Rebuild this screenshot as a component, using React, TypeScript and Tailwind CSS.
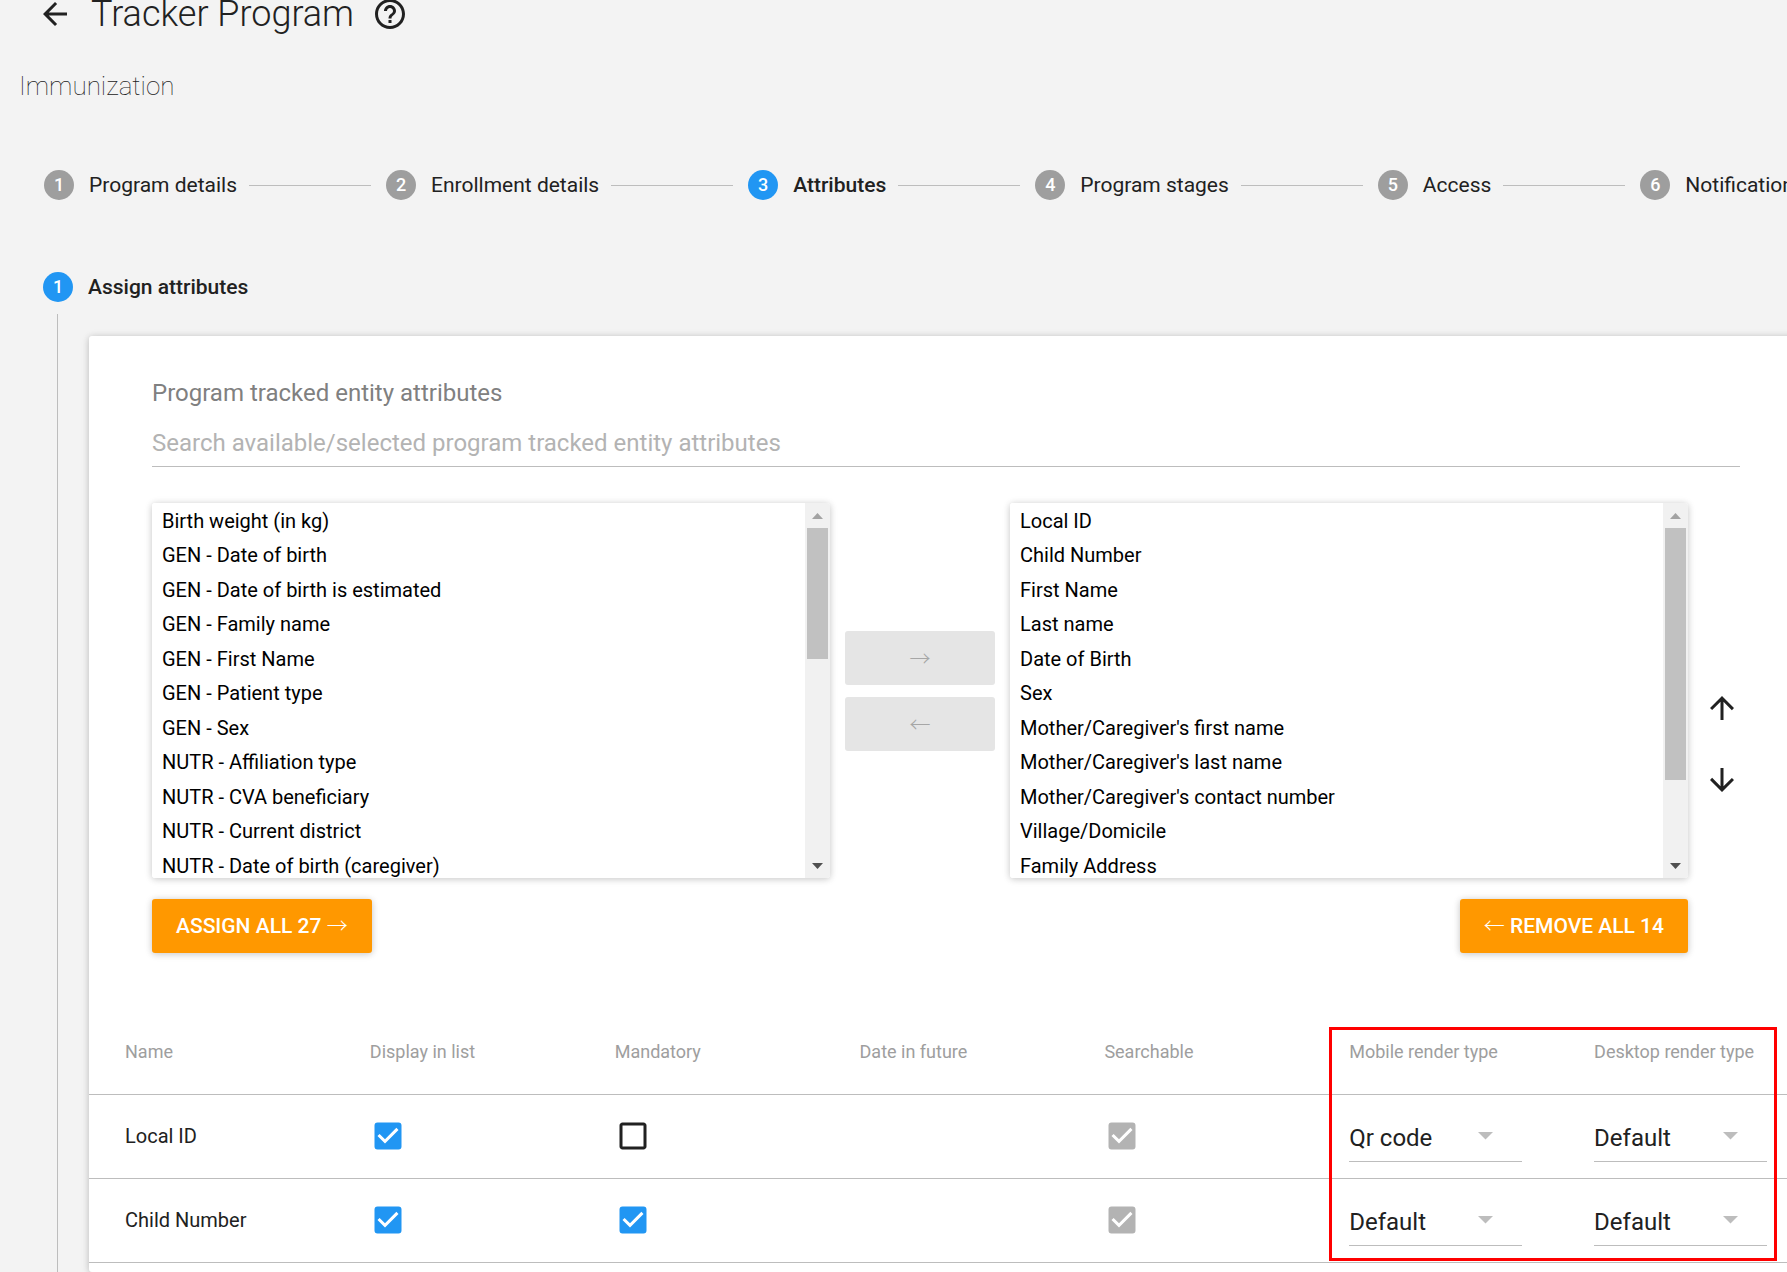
import React from "react";
import {
  MdArrowBack,
  MdArrowDownward,
  MdArrowUpward,
  MdCheckBox,
  MdCheckBoxOutlineBlank,
  MdHelpOutline,
} from "react-icons/md";

const steps = [
  "Program details",
  "Enrollment details",
  "Attributes",
  "Program stages",
  "Access",
  "Notifications",
];

const available = [
  "Birth weight (in kg)",
  "GEN - Date of birth",
  "GEN - Date of birth is estimated",
  "GEN - Family name",
  "GEN - First Name",
  "GEN - Patient type",
  "GEN - Sex",
  "NUTR - Affiliation type",
  "NUTR - CVA beneficiary",
  "NUTR - Current district",
  "NUTR - Date of birth (caregiver)",
];

const assigned = [
  "Local ID",
  "Child Number",
  "First Name",
  "Last name",
  "Date of Birth",
  "Sex",
  "Mother/Caregiver's first name",
  "Mother/Caregiver's last name",
  "Mother/Caregiver's contact number",
  "Village/Domicile",
  "Family Address",
];

const columns = [
  "Name",
  "Display in list",
  "Mandatory",
  "Date in future",
  "Searchable",
  "Mobile render type",
  "Desktop render type",
];

const rows = [
  { name: "Local ID", mandatory: false, mobile: "Qr code", desktop: "Default" },
  { name: "Child Number", mandatory: true, mobile: "Default", desktop: "Default" },
];

function StepBadge({ n, active }: { n: number; active: boolean }) {
  return (
    <span className="flex w-9 shrink-0 justify-center">
      <span
        className={`flex size-[30px] items-center justify-center rounded-full text-[18px] leading-none font-medium text-white ${
          active ? "bg-[#2196f3]" : "bg-[#9e9e9e]"
        }`}
      >
        {n}
      </span>
    </span>
  );
}

function Arrow({ children }: { children: string }) {
  return (
    <span className="font-['Noto_Sans_CJK_JP',sans-serif] leading-none font-light">
      {children}
    </span>
  );
}

function ListBox({
  label,
  items,
  thumb,
}: {
  label: string;
  items: string[];
  thumb: string;
}) {
  return (
    <div className="flex h-[375px] flex-1 overflow-hidden rounded-[3px] bg-white shadow-[0_1px_9px_rgba(0,0,0,0.12),0_1px_6px_rgba(0,0,0,0.12)]">
      <select
        multiple
        aria-label={label}
        className="h-full min-w-0 flex-1 overflow-hidden border-0 bg-white pt-[6px] pb-0 pl-2 text-[20px] text-black outline-none [scrollbar-width:none]"
      >
        {items.map((item) => (
          <option
            key={item}
            className="h-[34px] px-[2px] py-0 leading-[34px] even:h-[35px]"
          >
            {item}
          </option>
        ))}
      </select>
      <div className="flex w-[25px] flex-col items-center bg-[#f1f1f1]">
        <div className="flex h-[25px] shrink-0 items-center">
          <svg width="11" height="6" viewBox="0 0 11 6" fill="#a3a3a3">
            <path d="M0 6L5.5 0L11 6Z" />
          </svg>
        </div>
        <div className={`w-[21px] bg-[#c1c1c1] ${thumb}`} />
        <div className="mt-auto flex h-[25px] shrink-0 items-center">
          <svg width="11" height="6" viewBox="0 0 11 6" fill="#505050">
            <path d="M0 0L5.5 6L11 0Z" />
          </svg>
        </div>
      </div>
    </div>
  );
}

function Tick({
  label,
  checked,
  disabled,
}: {
  label: string;
  checked: boolean;
  disabled?: boolean;
}) {
  const [on, setOn] = React.useState(checked);
  const Icon = on ? MdCheckBox : MdCheckBoxOutlineBlank;
  return (
    <label className="relative flex size-9">
      <input
        type="checkbox"
        aria-label={label}
        checked={on}
        disabled={disabled}
        onChange={(e) => setOn(e.target.checked)}
        className="absolute inset-0 size-full opacity-0"
      />
      <Icon
        size={36}
        className={
          disabled ? "text-[#b3b3b3]" : on ? "text-[#2196f3]" : "text-[#212121]"
        }
      />
    </label>
  );
}

function RenderType({ label, value }: { label: string; value: string }) {
  return (
    <div className="relative mt-[2px] w-[173px] border-b border-[#bdbdbd]">
      <select
        aria-label={label}
        defaultValue={value}
        className="h-12 w-full appearance-none bg-transparent pt-[2px] text-[24px] text-[#212121] outline-none"
      >
        <option>Default</option>
        <option>Qr code</option>
      </select>
      <svg
        className="pointer-events-none absolute top-[19px] right-[29px]"
        width="15"
        height="8"
        viewBox="0 0 15 8"
        fill="#bdbdbd"
      >
        <path d="M0 0H15L7.5 7.5Z" />
      </svg>
    </div>
  );
}

export default function App() {
  return (
    <div className="flex min-h-screen flex-col overflow-hidden bg-[#f3f3f3] font-[Roboto,sans-serif] text-[#212121]">
      <header className="flex h-[27px] items-center pl-[37px]">
        <button type="button" aria-label="Back" className="shrink-0">
          <MdArrowBack size={36} />
        </button>
        <h1 className="ml-[18px] pt-[2px] text-[36px] leading-[27px] font-light">
          Tracker Program
        </h1>
        <button type="button" aria-label="Help" className="ml-[18px] shrink-0">
          <MdHelpOutline size={36} />
        </button>
      </header>

      <h2 className="mt-[41px] pl-[19px] text-[26px] leading-9 font-thin">
        Immunization
      </h2>

      <nav className="mt-[63px] flex h-9 items-center gap-3 pl-[41px]">
        {steps.map((step, i) => (
          <React.Fragment key={step}>
            {i > 0 && <span className="h-px w-[122px] shrink-0 bg-[#bdbdbd]" />}
            <button
              type="button"
              className={`flex shrink-0 items-center gap-3 text-[21px] leading-9 ${
                i === 2 ? "font-medium" : ""
              }`}
            >
              <StepBadge n={i + 1} active={i === 2} />
              {step}
            </button>
          </React.Fragment>
        ))}
      </nav>

      <div className="mt-[66px] flex h-9 items-center gap-3 pl-10 text-[21px] font-medium">
        <StepBadge n={1} active />
        <h3 className="pt-[2px]">Assign attributes</h3>
      </div>

      <div className="mt-[9px] ml-[57px] flex flex-1 border-l border-[#bdbdbd] pt-[22px] pl-[31px]">
        <section className="-mr-4 flex-1 rounded-[3px] bg-white shadow-[0_1px_9px_rgba(0,0,0,0.12),0_1px_6px_rgba(0,0,0,0.12)]">
          <div className="px-[63px] pt-[39px]">
            <label
              htmlFor="search"
              className="block text-[24px] leading-9 text-[#808080]"
            >
              Program tracked entity attributes
            </label>
            <input
              id="search"
              type="text"
              placeholder="Search available/selected program tracked entity attributes"
              className="mt-[7px] block h-[49px] w-full border-b border-[#bdbdbd] bg-transparent pt-[2px] text-[24px] outline-none placeholder:text-[#b3b3b3]"
            />

            <div className="mt-9 flex">
              <div className="flex flex-1 items-center gap-[15px]">
                <ListBox label="Available attributes" items={available} thumb="h-[131px]" />
                <div className="flex w-[150px] flex-col gap-3">
                  <button
                    type="button"
                    disabled
                    aria-label="Assign selected"
                    className="h-[54px] rounded-[3px] bg-[#e5e5e5] pt-1 text-[21px] text-[#a6a6a6]"
                  >
                    <Arrow>→</Arrow>
                  </button>
                  <button
                    type="button"
                    disabled
                    aria-label="Remove selected"
                    className="h-[54px] rounded-[3px] bg-[#e5e5e5] pt-1 text-[21px] text-[#a6a6a6]"
                  >
                    <Arrow>←</Arrow>
                  </button>
                </div>
                <ListBox label="Selected attributes" items={assigned} thumb="h-[252px]" />
              </div>
              <div className="flex w-[52px] flex-col items-end justify-center gap-9 pt-[107px]">
                <button type="button" aria-label="Move up">
                  <MdArrowUpward size={36} />
                </button>
                <button type="button" aria-label="Move down">
                  <MdArrowDownward size={36} />
                </button>
              </div>
            </div>

            <div className="mt-[21px] mr-[52px] flex justify-between">
              <button
                type="button"
                className="h-[54px] rounded-[3px] bg-[#ff9800] px-6 pt-[2px] text-[21px] font-medium text-white shadow-[0_1px_9px_rgba(0,0,0,0.12),0_1px_6px_rgba(0,0,0,0.12)]"
              >
                ASSIGN ALL 27 <Arrow>→</Arrow>
              </button>
              <button
                type="button"
                className="h-[54px] rounded-[3px] bg-[#ff9800] px-6 pt-[2px] text-[21px] font-medium text-white shadow-[0_1px_9px_rgba(0,0,0,0.12),0_1px_6px_rgba(0,0,0,0.12)]"
              >
                <Arrow>←</Arrow> REMOVE ALL 14
              </button>
            </div>
          </div>

          <div className="relative mt-[57px]">
            <table className="w-full table-fixed border-collapse text-left">
              <thead>
                <tr className="h-[84px] border-b border-[#bdbdbd] text-[18px] text-[#9e9e9e]">
                  {columns.map((c) => (
                    <th key={c} scope="col" className="pl-9 font-normal whitespace-nowrap">
                      {c}
                    </th>
                  ))}
                </tr>
              </thead>
              <tbody>
                {rows.map((r) => (
                  <tr key={r.name} className="h-[84px] border-b border-[#bdbdbd] text-[20px]">
                    <td className="py-0 pl-9">{r.name}</td>
                    <td className="py-0 pl-9">
                      <Tick label={`${r.name}: display in list`} checked />
                    </td>
                    <td className="py-0 pl-9">
                      <Tick label={`${r.name}: mandatory`} checked={r.mandatory} />
                    </td>
                    <td />
                    <td className="py-0 pl-9">
                      <Tick label={`${r.name}: searchable`} checked disabled />
                    </td>
                    <td className="py-0 pl-9">
                      <RenderType label={`${r.name}: mobile render type`} value={r.mobile} />
                    </td>
                    <td className="py-0 pl-9">
                      <RenderType label={`${r.name}: desktop render type`} value={r.desktop} />
                    </td>
                  </tr>
                ))}
              </tbody>
            </table>
            <div className="pointer-events-none absolute top-[17px] right-[26px] h-[234px] w-[448px] border-3 border-[#ff0000]" />
          </div>
        </section>
      </div>
    </div>
  );
}
